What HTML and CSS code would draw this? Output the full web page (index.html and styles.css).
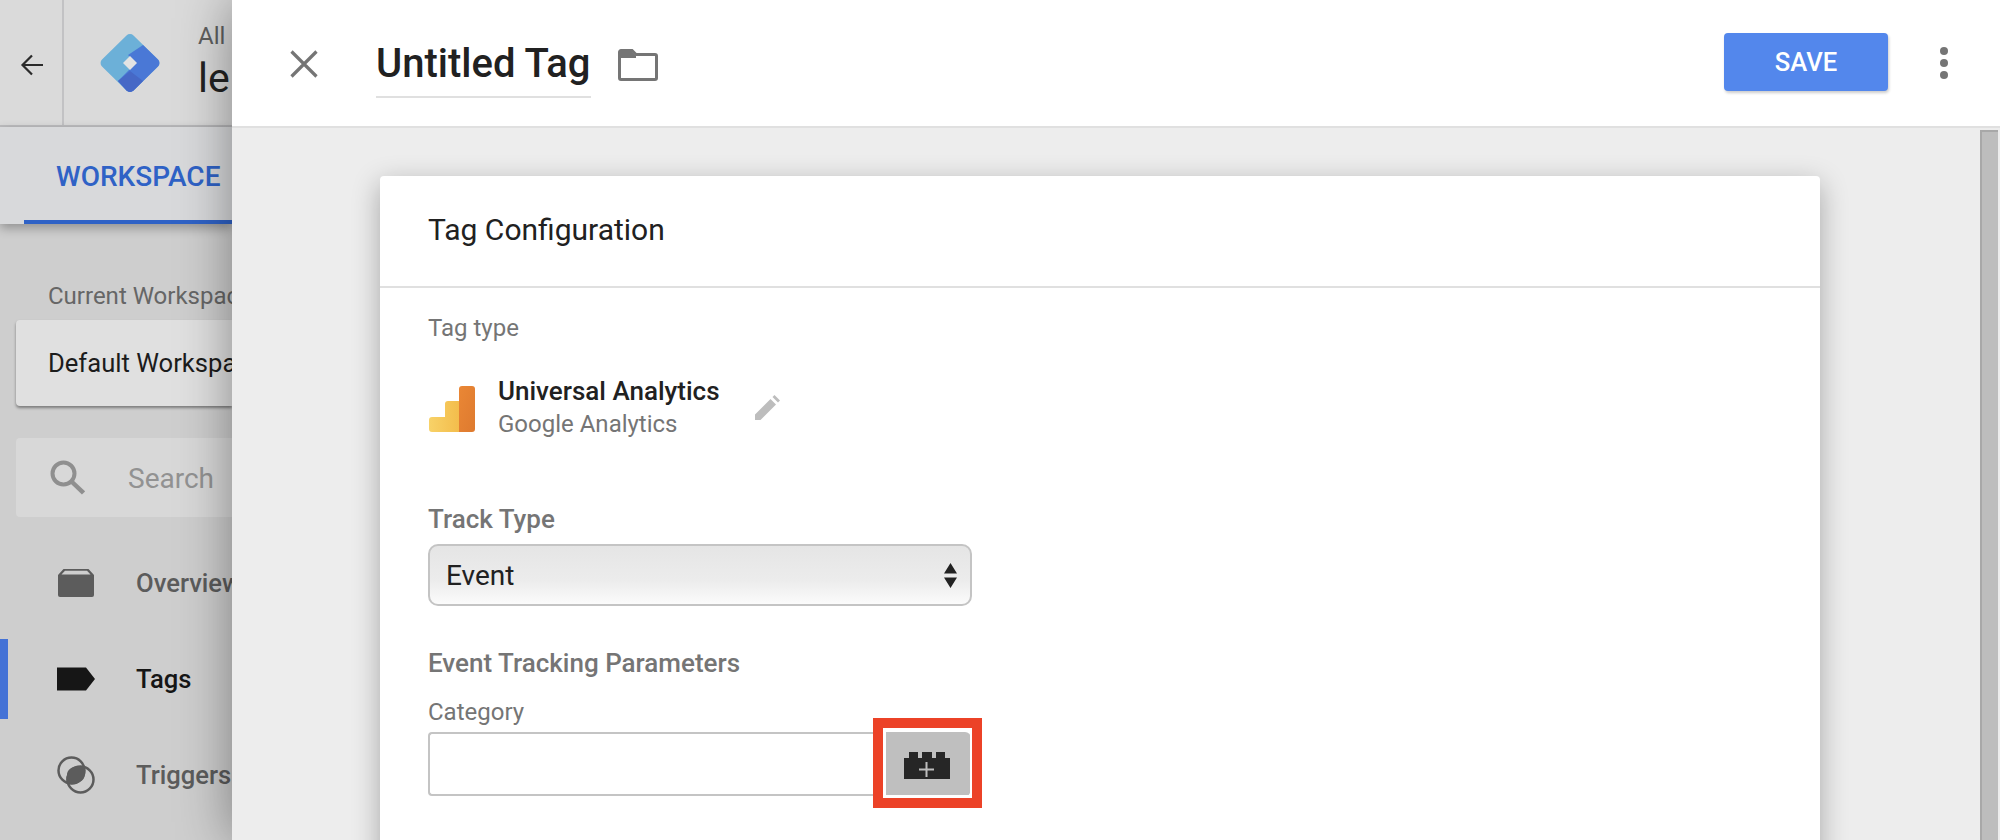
FILE: index.html
```html
<!DOCTYPE html>
<html lang="en">
<head>
<meta charset="utf-8">
<title>Untitled Tag</title>
<link rel="stylesheet" href="styles.css">
</head>
<body>
<div class="page">
  <div class="app">
    <header class="app-head">
      <div class="back">
        <svg class="back-icon" viewBox="0 0 24 24"><path d="M23 12H3M12 2.500 2.500 12l9.500 9.500" fill="none" stroke="#2b2b2b" stroke-width="2.200"/></svg>
      </div>
      <svg class="gtm-logo" viewBox="0 0 60 58">
        <path d="M26.500 1.500a5 5 0 0 1 7 0L58 25.500a5 5 0 0 1 0 7L33.500 56.500a5 5 0 0 1-7 0L2 32.500a5 5 0 0 1 0-7z" fill="#6cb0d8"/>
        <path d="M43 11 58 25.500a5 5 0 0 1 0 7L33.500 56.500a5 5 0 0 1-7 0L18 47 36 29 28 21z" fill="#4a78d6"/>
        <path d="M30 37 18 47l8.500 9.500a5 5 0 0 0 7 0L43 47z" fill="#4668c6"/>
        <path d="M30 22 37 29 30 36 23 29z" fill="#e3e3e3"/>
      </svg>
      <div class="crumbs">
        <span class="crumb-top">All</span>
        <span class="crumb-main">le</span>
      </div>
    </header>
    <nav class="tabbar"><div class="tab">WORKSPACE</div></nav>
    <aside class="side">
      <div class="side-label">Current Workspace</div>
      <div class="ws-box">Default Workspace</div>
      <div class="search">
        <svg class="search-icon" viewBox="0 0 35 35"><circle cx="13.500" cy="13.500" r="11" fill="none" stroke="#8f8f8f" stroke-width="4"/><path d="M21.500 21.500 33.500 33" stroke="#8f8f8f" stroke-width="4.500"/></svg>
        <span class="search-text">Search</span>
      </div>
      <ul class="menu">
        <li class="menu-item">
          <svg class="menu-icon" viewBox="0 0 38 38"><path d="M1 11 6.500 5h25L37 11v20a2 2 0 0 1-2 2H3a2 2 0 0 1-2-2z" fill="#5c5c5c"/><path d="M4.500 10.500 8 6.800h22l3.500 3.700z" fill="#cecece"/></svg>
          <span>Overview</span>
        </li>
        <li class="menu-item active">
          <svg class="menu-icon" viewBox="0 0 38 38"><path d="M0 7.500h29L38 19l-9 11.500H0z" fill="#161616"/></svg>
          <span>Tags</span>
        </li>
        <li class="menu-item">
          <svg class="menu-icon" viewBox="0 0 38 38"><circle cx="14.500" cy="14.500" r="13" fill="none" stroke="#5c5c5c" stroke-width="2.500"/><circle cx="23.500" cy="23.500" r="13" fill="none" stroke="#5c5c5c" stroke-width="2.500"/><path d="M10 19C10 13 17 9.500 23.500 10.500 28 11 28.500 18 27 22 24.500 27 15 30 10.500 27 9 25 9 22 10 19z" fill="#5c5c5c"/></svg>
          <span>Triggers</span>
        </li>
      </ul>
    </aside>
  </div>

  <section class="panel">
    <header class="panel-head">
      <svg class="close" viewBox="0 0 28 28"><path d="M1.500 1.500 26.500 26.500M26.500 1.500 1.500 26.500" stroke="#757575" stroke-width="3.200"/></svg>
      <div class="title">Untitled Tag</div>
      <svg class="folder" viewBox="0 0 40 32"><path d="M3 1.500h11l4 4h19a1.500 1.500 0 0 1 1.500 1.500v22a1.500 1.500 0 0 1-1.500 1.500H3A1.500 1.500 0 0 1 1.500 29V3A1.500 1.500 0 0 1 3 1.500z" fill="none" stroke="#757575" stroke-width="3"/><path d="M2 3h12l4 4v2H2z" fill="#757575"/></svg>
      <button class="save">SAVE</button>
      <div class="dots"><i></i><i></i><i></i></div>
    </header>
    <div class="panel-body">
      <div class="card">
        <h2 class="card-title">Tag Configuration</h2>
        <div class="card-body">
          <div class="tag-label">Tag type</div>
          <div class="tag-type">
            <svg class="ga-icon" viewBox="0 0 46 46">
              <defs>
                <linearGradient id="gaYellow" x1="0" x2="1" y1="0" y2="0"><stop offset="0" stop-color="#f8d268"/><stop offset="1" stop-color="#f3bd4c"/></linearGradient>
                <linearGradient id="gaOrange" x1="0" x2="1" y1="0" y2="1"><stop offset="0" stop-color="#ea8735"/><stop offset="1" stop-color="#de7a2f"/></linearGradient>
              </defs>
              <path d="M3 31h13V18a3 3 0 0 1 3-3h11v31H3a3 3 0 0 1-3-3v-9a3 3 0 0 1 3-3z" fill="url(#gaYellow)"/>
              <path d="M30 3a3 3 0 0 1 3-3h10a3 3 0 0 1 3 3v40a3 3 0 0 1-3 3H30z" fill="url(#gaOrange)"/>
            </svg>
            <div class="tag-names">
              <div class="tag-name">Universal Analytics</div>
              <div class="tag-sub">Google Analytics</div>
            </div>
            <svg class="pencil" viewBox="0 0 25 25"><path d="M0 19.500 15.500 4l5.500 5.500L5.500 25H0zM17.500 2l2-2L25 5.500l-2 2z" fill="#bdbdbd"/></svg>
          </div>
          <div class="field-title">Track Type</div>
          <div class="select">
            <span>Event</span>
            <svg class="updown" viewBox="0 0 13 25"><path d="M6.500 0 13 10.500H0zM0 14.500h13L6.500 25z" fill="#222"/></svg>
          </div>
          <div class="field-title section">Event Tracking Parameters</div>
          <div class="field-label">Category</div>
          <div class="input-row">
            <div class="input"></div>
            <div class="var-btn">
              <svg class="lego" viewBox="0 0 46 27"><path d="M0 6h5V0h9v6h4V0h10v6h4V0h9v6h5v21H0z" fill="#262626"/><path d="M22.500 10v15M15 17.500h15" stroke="#bdbdbd" stroke-width="2"/></svg>
            </div>
            <div class="highlight"></div>
          </div>
        </div>
      </div>
      <div class="scrollbar"></div>
    </div>
  </section>
</div>
</body>
</html>
```

FILE: styles.css
```css
* { box-sizing: border-box; }
html, body { margin: 0; padding: 0; }
body { font-family: Roboto, "Liberation Sans", sans-serif; background: #fff; color: #212121; }
.page { position: relative; width: 2000px; height: 840px; overflow: hidden; background: #cecece; }

/* Dimmed application behind the panel */
.app { width: 232px; }
.app-head { display: flex; align-items: center; height: 127px; background: #dadada; border-bottom: 2px solid #bdbdbf; }
.back { display: flex; align-items: center; justify-content: center; width: 64px; height: 100%; border-right: 2px solid #c2c2c4; flex: none; }
.back-icon { width: 24px; height: 24px; margin: 4px 0 0 2px; }
.gtm-logo { width: 60px; height: 58px; margin-left: 36px; flex: none; }
.crumbs { display: flex; flex-direction: column; margin-left: 38px; }
.crumb-top { font-size: 24px; line-height: 26px; color: #5f5f5f; margin-top: 0; }
.crumb-main { font-size: 41px; line-height: 50px; color: #222; margin-top: 4px; }

.tabbar { height: 97px; background: #d8d9db; box-shadow: 0 4px 10px rgba(0,0,0,.3); position: relative; }
.tab { margin-left: 24px; height: 97px; padding: 34px 0 0 32px; font-size: 28px; font-weight: 500; line-height: 32px; color: #2f62c6; border-bottom: 4px solid #2f62c6; white-space: nowrap; }

.side { padding-top: 57px; white-space: nowrap; }
.side-label { padding-left: 48px; font-size: 24px; line-height: 30px; color: #666; }
.ws-box { margin: 9px 0 0 16px; height: 86px; padding: 27px 0 0 32px; font-size: 25.600px; line-height: 32px; color: #1c1c1c; background: #e0e0e0; border-radius: 4px 0 0 4px; box-shadow: 0 2px 3px rgba(0,0,0,.4); }
.search { display: flex; align-items: center; height: 79px; margin: 32px 0 0 16px; padding-left: 34px; font-size: 28px; color: #929292; background: #d8d8d8; border-radius: 4px 0 0 4px; }
.search-icon { width: 35px; height: 35px; margin-right: 43px; flex: none; }
.search-text { padding-top: 2px; }
.menu { list-style: none; margin: 18px 0 0; padding: 0; }
.menu-item { display: flex; align-items: center; height: 96px; padding-left: 57px; font-size: 25.600px; font-weight: 500; color: #5c5c5c; }
.menu-item.active { color: #161616; position: relative; }
.menu-item.active::before { content: ""; position: absolute; left: 0; top: 8px; width: 8px; height: 80px; background: #4472d6; }
.menu-icon { width: 38px; height: 38px; margin-right: 41px; flex: none; }

/* Slide-over panel */
.panel { position: absolute; left: 232px; top: 0; right: 0; bottom: 0; display: flex; flex-direction: column; background: #ededed; box-shadow: 0 0 50px rgba(0,0,0,.4); }
.panel-head { display: flex; align-items: center; height: 128px; flex: none; background: #fff; border-bottom: 2px solid #e0e0e0; padding-left: 58px; }
.close { width: 28px; height: 28px; flex: none; margin: 1px 58px 0 0; }
.title { font-size: 40px; font-weight: 500; line-height: 50px; color: #212121; height: 63px; width: 215px; padding-top: 4px; border-bottom: 2px solid #e0e0e0; margin-top: 7px; white-space: nowrap; }
.folder { width: 40px; height: 32px; margin-left: 27px; margin-top: 3px; flex: none; }
.save { width: 164px; height: 58px; margin-left: auto; margin-bottom: 3px; padding-bottom: 1px; border: 0; border-radius: 4px; background: #5387ec; color: #fff; font-family: inherit; font-size: 25.600px; font-weight: 500; box-shadow: 1px 2px 3px rgba(0,0,0,.2); }
.dots { display: flex; flex-direction: column; gap: 4px; margin: 0 52px 0 52px; }
.dots i { display: block; width: 8px; height: 8px; border-radius: 50%; background: #757575; }

.panel-body { flex: 1; display: flex; align-items: flex-start; padding: 48px 2px 0 148px; min-height: 0; }
.card { width: 1440px; height: 800px; flex: none; background: #fff; border-radius: 4px; box-shadow: 0 8px 28px rgba(0,0,0,.3); }
.card-title { margin: 0; height: 112px; padding: 37px 48px 0; font-size: 30px; font-weight: 400; line-height: 34px; color: #212121; border-bottom: 2px solid #e0e0e0; }
.card-body { padding: 25px 48px 0; }
.tag-label { font-size: 24px; line-height: 30px; color: #757575; }
.tag-type { display: flex; align-items: center; margin-top: 25px; height: 78px; }
.ga-icon { width: 46px; height: 46px; margin: 3px 0 0 1px; flex: none; }
.tag-names { margin-left: 23px; }
.tag-name { font-size: 26px; font-weight: 500; line-height: 33px; color: #212121; }
.tag-sub { font-size: 24px; line-height: 32px; color: #757575; }
.pencil { width: 25px; height: 25px; margin-left: 35px; flex: none; }
.field-title { margin-top: 58px; font-size: 26px; font-weight: 500; line-height: 30px; color: #757575; }
.field-title.section { margin-top: 42px; }
.select { display: flex; align-items: center; justify-content: space-between; width: 544px; height: 62px; margin-top: 10px; padding: 0 13px 0 16px; font-size: 28px; color: #212121; background: linear-gradient(#e5e5e5, #ececec 60%, #fbfbfb); border: 2px solid #c4c4c4; border-radius: 10px; }
.updown { width: 13px; height: 25px; flex: none; }
.field-label { margin-top: 19px; font-size: 24px; line-height: 30px; color: #757575; }
.input-row { position: relative; display: flex; width: 543px; height: 64px; margin-top: 5px; }
.input { flex: 1; border: 2px solid #c4c4c4; border-right: 0; border-radius: 4px 0 0 4px; background: #fff; }
.var-btn { display: flex; align-items: center; justify-content: center; width: 85px; flex: none; background: #bfbfbf; border-radius: 0 6px 6px 0; }
.lego { width: 46px; height: 27px; margin-top: 2px; margin-right: 3px; }
.highlight { position: absolute; left: 445px; top: -14px; width: 109px; height: 90px; border: 10px solid #ec4227; }
.highlight::before { content: ""; position: absolute; left: 0; top: 0; bottom: 0; width: 3px; background: #fff; }
.highlight::after { content: ""; position: absolute; left: 0; right: 0; top: 0; bottom: 0; border: solid #fff; border-width: 3px 2px; }

.scrollbar { width: 18px; height: 720px; margin-left: auto; margin-top: -46px; background: #bdbdbd; border-left: 2px solid #a8a8a8; border-top: 2px solid #a8a8a8; }
```
